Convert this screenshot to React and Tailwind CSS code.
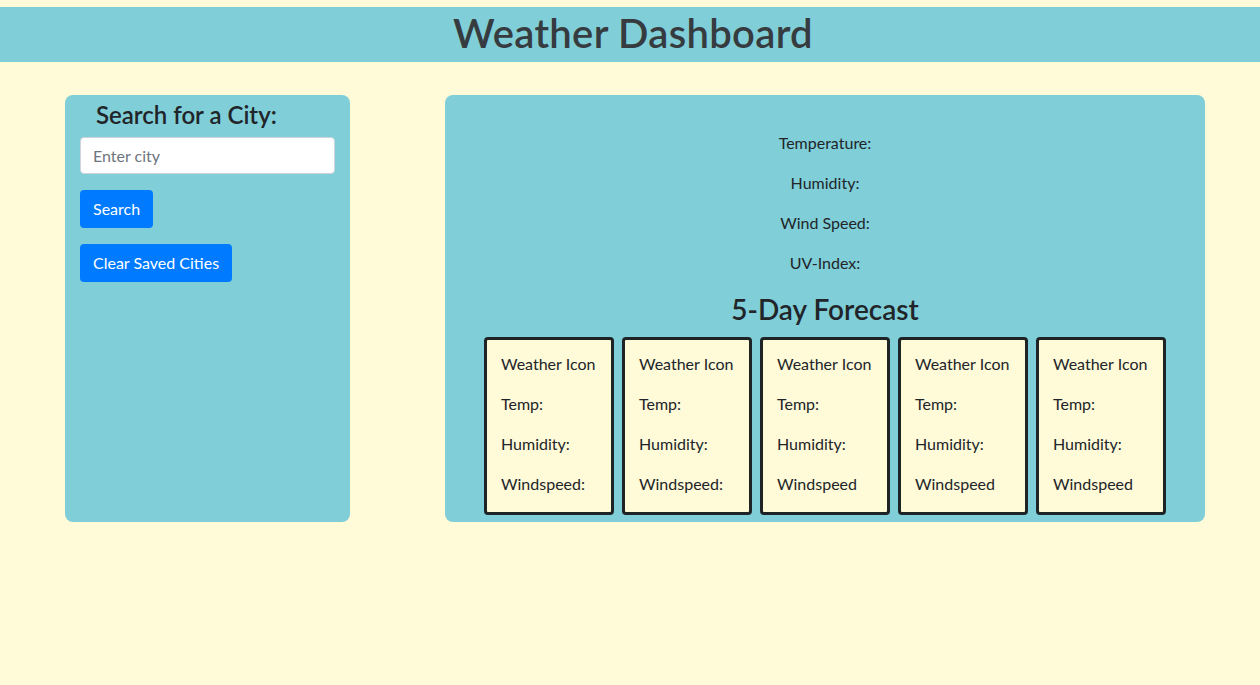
export default function App() {
  const cards = ["Windspeed:", "Windspeed:", "Windspeed", "Windspeed", "Windspeed"];
  return (
    <div className="min-h-[685px] w-full bg-[#fffad8] pt-[7px] text-[#212529]" style={{ fontFamily: "Lato, 'Open Sans', sans-serif" }}>
      <header className="h-[55px] bg-[#80ced7] flex items-center justify-center pb-[4px] pl-[6px]">
        <h1 className="text-[40px] leading-none font-semibold text-[#363b3f] tracking-[0.3px]">Weather Dashboard</h1>
      </header>
      <div className="flex pt-[33px]">
        <div className="ml-[65px] w-[285px] h-[427px] bg-[#80ced7] rounded-[8px] px-[15px] pt-[2px]">
          <h4 className="text-[24px] leading-[36px] font-semibold pl-[16px]">Search for a City:</h4>
          <input
            className="mt-[4px] block w-[255px] h-[37px] bg-white border border-[#ced4da] rounded-[4px] px-[12px] text-[16px] placeholder:text-[#6c757d] outline-none"
            placeholder="Enter city"
          />
          <button className="mt-[16px] block h-[38px] px-[13px] bg-[#007bff] text-white text-[16px] rounded-[4px]">Search</button>
          <button className="mt-[16px] block h-[38px] px-[13px] bg-[#007bff] text-white text-[16px] rounded-[4px]">Clear Saved Cities</button>
        </div>
        <div className="ml-[95px] w-[760px] h-[427px] bg-[#80ced7] rounded-[8px] flex flex-col items-center pt-[36px]">
          {["Temperature:", "Humidity:", "Wind Speed:", "UV-Index:"].map((t) => (
            <p key={t} className="text-[16px] leading-[24px] mb-[16px]">{t}</p>
          ))}
          <h3 className="text-[28px] leading-[34px] font-semibold mt-[1px] mb-[11px]">5-Day Forecast</h3>
          <div className="flex gap-[8px]">
            {cards.map((w, i) => (
              <div key={i} className="w-[130px] h-[178px] border-[3px] border-[#1e2326] rounded-[4px] bg-[#fffad8] pl-[14px] pt-[12px]">
                {["Weather Icon", "Temp:", "Humidity:", w].map((t) => (
                  <p key={t} className="text-[16px] leading-[24px] mb-[16px]">{t}</p>
                ))}
              </div>
            ))}
          </div>
        </div>
      </div>
    </div>
  );
}
